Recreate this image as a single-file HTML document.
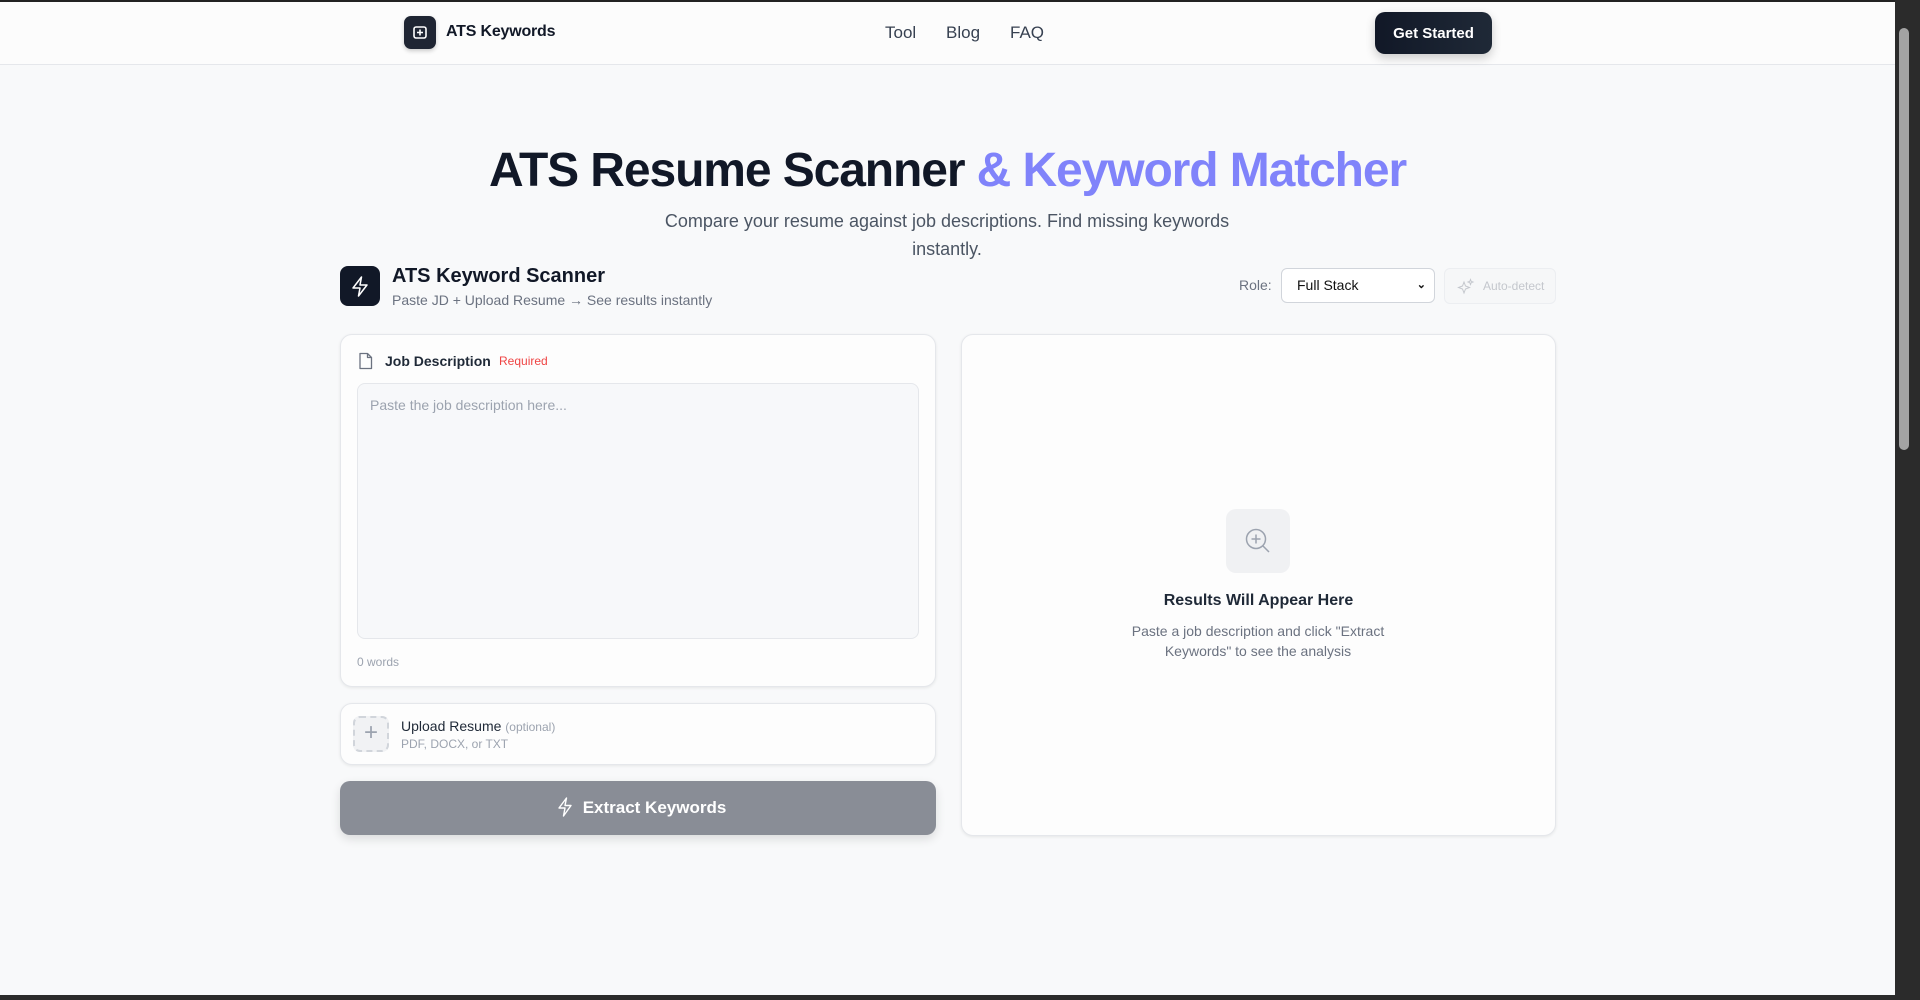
<!DOCTYPE html>
<html><head><meta charset="utf-8"><style>
*{box-sizing:border-box;margin:0;padding:0}
body{width:1920px;height:1000px;overflow:hidden;font-family:"Liberation Sans",sans-serif;background:#f8f9fa;position:relative;color:#111827}
.a{position:absolute}
.hdr{left:0;top:0;width:1895px;height:65px;background:#fcfcfc;border-top:2px solid #222;border-bottom:1px solid #e5e7eb}
.card{background:#fdfdfd;border:1px solid #e5e7eb;border-radius:12px;box-shadow:0 1px 3px rgba(0,0,0,.08)}
.nav{top:23px;font-size:17px;color:#374151}
</style></head><body>
<div class="a hdr"></div>
<div class="a" style="left:404px;top:16px;width:32px;height:33px;border-radius:7px;background:#1f2533;box-shadow:0 2px 4px rgba(0,0,0,.2)">
<svg width="32" height="33" viewBox="0 0 32 33"><rect x="10" y="11" width="12" height="11" rx="2" fill="none" stroke="#fff" stroke-width="1.6"/><path d="M16 13.5v6M13 16.5h6" stroke="#fff" stroke-width="1.6"/></svg></div>
<div class="a" style="left:446px;top:23px;font-size:16px;font-weight:bold;letter-spacing:-0.2px;color:#111827">ATS Keywords</div>
<div class="a nav" style="left:885px">Tool</div>
<div class="a nav" style="left:946px">Blog</div>
<div class="a nav" style="left:1010px">FAQ</div>
<div class="a" style="left:1375px;top:12px;width:117px;height:42px;border-radius:10px;background:linear-gradient(90deg,#111827,#1f2937);color:#fff;font-size:15px;font-weight:bold;text-align:center;line-height:44px;box-shadow:0 4px 10px rgba(0,0,0,.2)">Get Started</div>
<div class="a" style="left:0;width:1895px;top:143px;text-align:center;font-size:48px;font-weight:bold;letter-spacing:-1.1px;color:#111827">ATS Resume Scanner <span style="color:#8083fa">&amp; Keyword Matcher</span></div>
<div class="a" style="left:657px;width:580px;top:207px;text-align:center;font-size:18px;line-height:28px;color:#4b5563">Compare your resume against job descriptions. Find missing keywords instantly.</div>
<div class="a" style="left:340px;top:266px;width:40px;height:40px;border-radius:8px;background:#111827">
<svg width="40" height="40" viewBox="0 0 40 40"><path d="M21.5 11L13 22h7l-1.5 8L27 19h-7z" fill="none" stroke="#fff" stroke-width="1.5" stroke-linejoin="round"/></svg></div>
<div class="a" style="left:392px;top:265px;font-size:20px;font-weight:bold;color:#111827">ATS Keyword Scanner</div>
<div class="a" style="left:392px;top:292px;font-size:14px;color:#6b7280">Paste JD + Upload Resume → See results instantly</div>
<div class="a" style="left:1239px;top:277px;font-size:14px;color:#6b7280">Role:</div>
<div class="a" style="left:1281px;top:268px;width:154px;height:35px;border:1px solid #d1d5db;border-radius:6px;background:#fff;font-size:14px;line-height:33px;padding-left:15px;color:#111">Full Stack<span style="position:absolute;right:8px;top:0;font-size:11px;font-weight:bold">⌄</span></div>
<div class="a" style="left:1444px;top:268px;width:112px;height:36px;border:1px solid #eceef1;border-radius:6px;background:#f6f7f8;font-size:12px;line-height:34px;padding-left:38px;color:#c4c7cd">Auto-detect
<svg class="a" style="left:12px;top:9px" width="18" height="18" viewBox="0 0 18 18"><path d="M7 4l1.5 4 4 1.5-4 1.5L7 15l-1.5-4-4-1.5 4-1.5zM13.5 1.5l.7 1.8 1.8.7-1.8.7-.7 1.8-.7-1.8-1.8-.7 1.8-.7z" fill="none" stroke="#c4c7cd" stroke-width="1"/></svg></div>
<div class="a card" style="left:340px;top:334px;width:596px;height:353px"></div>
<svg class="a" style="left:358px;top:352px" width="16" height="18" viewBox="0 0 16 18"><path d="M2 1.5h7.5l4 4v11H2z M9.5 1.5v4h4" fill="none" stroke="#6b7280" stroke-width="1.3" stroke-linejoin="round"/></svg>
<div class="a" style="left:385px;top:353px;font-size:14px;font-weight:bold;color:#1f2937">Job Description</div>
<div class="a" style="left:499px;top:354px;font-size:12px;color:#ef4444">Required</div>
<div class="a" style="left:357px;top:383px;width:562px;height:256px;border:1px solid #e5e7eb;border-radius:8px;background:#f7f8fa;padding:13px 12px;font-size:14px;color:#9ca3af">Paste the job description here...</div>
<div class="a" style="left:357px;top:655px;font-size:12px;color:#9ca3af">0 words</div>
<div class="a card" style="left:340px;top:703px;width:596px;height:62px"></div>
<div class="a" style="left:353px;top:716px;width:36px;height:36px;border:2px dashed #d1d5db;border-radius:7px;background:#f1f2f4;text-align:center;line-height:30px;font-size:24px;color:#9ca3af">+</div>
<div class="a" style="left:401px;top:718px;font-size:14px;color:#1f2937">Upload Resume <span style="font-size:12px;color:#9ca3af">(optional)</span></div>
<div class="a" style="left:401px;top:737px;font-size:12px;color:#9ca3af">PDF, DOCX, or TXT</div>
<div class="a" style="left:340px;top:781px;width:596px;height:54px;border-radius:10px;background:#898d96;box-shadow:0 4px 10px rgba(0,0,0,.12);color:#fff;font-size:17px;font-weight:bold;text-align:center;line-height:54px;padding-left:6px"><svg style="vertical-align:-4px;margin-right:9px" width="18" height="20" viewBox="0 0 18 20"><path d="M10.5 1L3 11h6l-1.5 8L15 8.5H9z" fill="none" stroke="#fff" stroke-width="1.4" stroke-linejoin="round"/></svg>Extract Keywords</div>
<div class="a card" style="left:961px;top:334px;width:595px;height:502px"></div>
<div class="a" style="left:1226px;top:509px;width:64px;height:64px;border-radius:10px;background:#f0f1f3">
<svg width="64" height="64" viewBox="0 0 64 64"><circle cx="30" cy="30" r="9.5" fill="none" stroke="#9ca3af" stroke-width="1.5"/><path d="M37 37l6 6M30 25.5v9M25.5 30h9" stroke="#9ca3af" stroke-width="1.5"/></svg></div>
<div class="a" style="left:961px;width:595px;top:592px;text-align:center;font-size:16px;font-weight:bold;color:#1f2937">Results Will Appear Here</div>
<div class="a" style="left:1118px;width:280px;top:621px;text-align:center;font-size:14px;line-height:20px;color:#6b7280">Paste a job description and click "Extract Keywords" to see the analysis</div>
<div class="a" style="left:1895px;top:0;width:25px;height:1000px;background:#2b2b2b"></div>
<div class="a" style="left:1899px;top:28px;width:10px;height:422px;border-radius:5px;background:#a3a3a3"></div>
<div class="a" style="left:0;top:995px;width:1895px;height:5px;background:#2b2b2b"></div>
</body></html>
